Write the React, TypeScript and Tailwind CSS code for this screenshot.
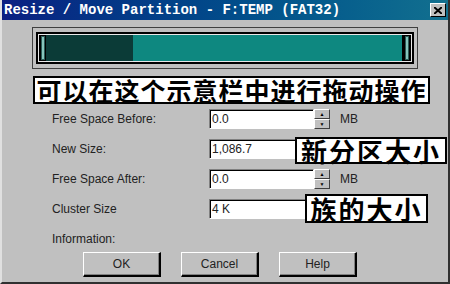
import React from 'react';

const ui = { fontFamily: '"Liberation Sans", Arial, sans-serif' };
const cjk = { fontFamily: '"Noto Sans CJK SC", "Noto Sans", sans-serif' };

const Spin = () => (
  <div className="flex flex-col w-[16px] h-[20px]">
    {['▲', '▼'].map((a) => (
      <div
        key={a}
        className="flex-1 flex items-center justify-center bg-[#c0c0c0] border-t border-l border-t-white border-l-white border-b border-r border-b-[#404040] border-r-[#404040] text-[5px] leading-none text-black"
      >
        {a}
      </div>
    ))}
  </div>
);

const Field = ({ value, spin }: { value: string; spin?: boolean }) => (
  <div className="flex items-center">
    <div className="w-[105px] h-[20px] bg-white border-t border-l border-t-[#808080] border-l-[#808080] border-b border-r border-b-white border-r-white shadow-[inset_1px_1px_0_#000] pl-[2px] flex items-center text-[12px] text-[#222]">
      {value}
    </div>
    {spin && <Spin />}
    {spin && <span className="ml-[10px] text-[12px] text-[#222]">MB</span>}
  </div>
);

const Row = ({ label, children }: { label: string; children: React.ReactNode }) => (
  <div className="relative flex items-center h-[20px] pl-[50px]">
    <span className="w-[157px] text-[12px] text-[#222]">{label}</span>
    {children}
  </div>
);

const Note = ({ text, className }: { text: string; className: string }) => (
  <div
    className={`absolute bg-white border-2 border-black flex items-center justify-center font-bold text-[26px] leading-none tracking-[2px] text-black ${className}`}
    style={cjk}
  >
    {text}
  </div>
);

const Btn = ({ label }: { label: string }) => (
  <button className="w-[78px] h-[25px] bg-[#c0c0c0] border-t border-l border-t-white border-l-white border-b-2 border-r-2 border-b-black border-r-black shadow-[inset_-1px_-1px_0_#808080] text-[12px] text-[#222]">
    {label}
  </button>
);

export default function App() {
  return (
    <div
      className="w-[450px] h-[284px] bg-[#c0c0c0] border-l-2 border-l-[#e0e0e0] border-r-2 border-r-[#303030] border-b-2 border-b-[#303030] flex flex-col overflow-hidden"
      style={ui}
    >
      {/* title bar */}
      <div className="h-[20px] flex items-center justify-between bg-gradient-to-r from-[#0b1f82] to-[#12708f] pl-[2px] pr-[2px]">
        <span
          className="text-white font-bold text-[14px] leading-none whitespace-pre"
          style={{ fontFamily: '"Liberation Mono", "Courier New", monospace' }}
        >
          Resize / Move Partition - F:TEMP (FAT32)
        </span>
        <div className="w-[16px] h-[14px] bg-[#c0c0c0] border-t border-l border-t-white border-l-white border-b border-r border-b-black border-r-black flex items-center justify-center">
          <svg width="8" height="7" viewBox="0 0 8 7">
            <path d="M0 0 L8 7 M8 0 L0 7" stroke="#000" strokeWidth="2" />
          </svg>
        </div>
      </div>

      {/* partition bar */}
      <div className="mt-[7px] ml-[30px] w-[386px] h-[42px] border border-[#404040] px-[3px] py-[4px]">
        <div className="h-full border-2 border-black shadow-[inset_1px_1px_0_#e8e8e8,inset_-1px_-1px_0_#e8e8e8] p-[1px]">
          <div className="h-full bg-black flex items-stretch pl-[2px] pr-[2px]">
            <div className="w-[4px] my-[1px] bg-[#86c4bb] border border-[#2a5a55]" />
            <div className="w-[1px]" />
            <div className="w-[87px] bg-[#0b3b37]" />
            <div className="flex-1 bg-[#0e8880]" />
            <div className="w-[3px]" />
            <div className="w-[4px] my-[1px] bg-[#86c4bb] border border-[#2a5a55]" />
          </div>
        </div>
      </div>

      {/* banner */}
      <div
        className="mt-[7px] ml-[31px] w-[397px] h-[28px] bg-white border-2 border-black flex items-center justify-center font-bold text-[25px] leading-none tracking-[1px] text-black"
        style={cjk}
      >
        可以在这个示意栏中进行拖动操作
      </div>

      {/* fields */}
      <div className="mt-[5px] flex flex-col gap-[10px]">
        <Row label="Free Space Before:">
          <Field value="0.0" spin />
        </Row>
        <Row label="New Size:">
          <Field value="1,086.7" />
          <Note text="新分区大小" className="left-[293px] top-[-2px] w-[152px] h-[27px]" />
        </Row>
        <Row label="Free Space After:">
          <Field value="0.0" spin />
        </Row>
        <Row label="Cluster Size">
          <Field value="4 K" />
          <Note text="族的大小" className="left-[303px] top-[-5px] w-[123px] h-[29px]" />
        </Row>
      </div>

      <div className="mt-[14px] pl-[50px] text-[12px] leading-none text-[#222]">Information:</div>

      <div className="mt-[7px] ml-[81px] flex gap-[20px]">
        <Btn label="OK" />
        <Btn label="Cancel" />
        <Btn label="Help" />
      </div>
    </div>
  );
}
